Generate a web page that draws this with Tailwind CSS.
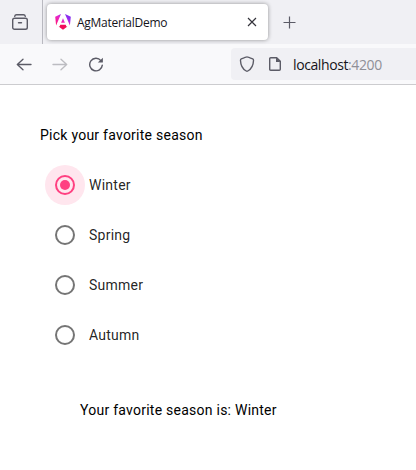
<!DOCTYPE html>
<html lang="en">
<head>
<meta charset="utf-8">
<title>AgMaterialDemo</title>
<script src="https://cdn.jsdelivr.net/npm/@tailwindcss/browser@4"></script>
</head>
<body class="w-[416px] h-[470px] overflow-hidden bg-white font-['Roboto',sans-serif] text-sm leading-5 tracking-[0.25px] text-black">
<header class="font-['Open_Sans',sans-serif] tracking-normal">
  <div class="flex h-11 bg-[#f0f0f4]">
    <div class="flex w-[43px] shrink-0 border-r border-[#b9b9c0] pl-3 pt-[14px]">
      <svg class="size-4" viewBox="0 0 16 16" fill="none" stroke="#5b5b66" stroke-width="1.4" stroke-linecap="round" stroke-linejoin="round"><path d="M2.7 2.3 Q3 .7 4.5 .7 H11.5 Q13 .7 13.3 2.3"/><rect x=".7" y="4.2" width="14.6" height="11" rx="1.8"/><path d="M6.5 8.8H9.5"/></svg>
    </div>
    <div class="ml-1 mt-1 flex h-9 w-[221px] shrink-0 items-center rounded bg-white pl-2 pr-[11px] shadow-[0_0_4px_rgba(0,0,0,0.4)]">
      <svg class="size-4 shrink-0" viewBox="0 0 16 16">
        <defs><linearGradient id="lg" x1="0" y1="1" x2="1" y2="0"><stop offset="0" stop-color="#ff1463"/><stop offset=".45" stop-color="#ed25c4"/><stop offset=".7" stop-color="#9c2af0"/><stop offset="1" stop-color="#6633ed"/></linearGradient></defs>
        <path fill="url(#lg)" d="M6 0 .2 2.7l.9 8.8L6 0zM10 0l4.9 11.5.9-8.8L10 0zM8 4.2 6.1 8.7h3.8L8 4.2z"/>
        <path fill="#f20c5c" d="M5.3 10.7h5.4l.7 1.7 1 .1L8 15.8 3.6 12.5l1-.1z"/>
      </svg>
      <span class="ml-[6px] whitespace-nowrap pt-[2px] text-[12px] tracking-[-0.27px] text-[#15141a]">AgMaterialDemo</span>
      <svg class="ml-auto size-[10px]" viewBox="0 0 10 10" stroke="#34333b" stroke-width="1.15"><path d="M1 1 9 9M9 1 1 9"/></svg>
    </div>
    <svg class="ml-[15px] mt-4 size-[13px]" viewBox="0 0 13 13" stroke="#5b5b66" stroke-width="1.2"><path d="M6.5 .5V12.5M.5 6.5H12.5"/></svg>
  </div>
  <div class="flex h-[41px] items-center border-b border-[#cccccf] bg-[#f9f9fb] pl-4">
    <svg class="size-4" viewBox="0 0 16 16" fill="none" stroke="#5b5b66" stroke-width="1.35" stroke-linecap="round" stroke-linejoin="round"><path d="M15 8.5H1.3M7 3.2 1.3 8.5 7 13.8"/></svg>
    <svg class="ml-5 size-4" viewBox="0 0 16 16" fill="none" stroke="#bcbcc1" stroke-width="1.35" stroke-linecap="round" stroke-linejoin="round"><path d="M1 8.5H14.7M9 3.2 14.7 8.5 9 13.8"/></svg>
    <svg class="ml-5 size-4" viewBox="0 0 16 16"><path d="M12.9 4.6A6.3 6.3 0 1 0 14.3 9.1" fill="none" stroke="#5b5b66" stroke-width="1.4" stroke-linecap="round"/><path fill="#5b5b66" d="M14.9 1.7V6.5H9.8z"/></svg>
    <div class="ml-[127px] flex h-8 flex-1 items-center rounded-l bg-[#f0f0f4] pl-2">
      <svg class="size-4" viewBox="0 0 16 16" fill="none" stroke="#5b5b66" stroke-width="1.35" stroke-linejoin="round"><path d="M8 .8Q9 .8 13.7 2.9Q14.6 3.3 14.5 4.6Q14.2 12 8.8 15Q8 15.4 7.2 15Q1.8 12 1.5 4.6Q1.4 3.3 2.3 2.9Q7 .8 8 .8Z"/></svg>
      <svg class="ml-3 size-4" viewBox="0 0 16 16"><path fill="none" stroke="#5b5b66" stroke-width="1.4" stroke-linejoin="round" d="M3.7 1.7H9.7L13.3 5.3V13.3Q13.3 14.3 12.3 14.3H3.7Q2.7 14.3 2.7 13.3V2.7Q2.7 1.7 3.7 1.7Z"/><path fill="#5b5b66" d="M9 1.5V6H13.5z"/></svg>
      <span class="ml-[10px] pt-[2px] text-[14px] tracking-[-0.4px] text-[#15141a]">localhost<span class="text-[#8f8f97]">:4200</span></span>
    </div>
  </div>
</header>
<main class="px-10 pt-10">
  <p>Pick your favorite season</p>
  <div class="mt-5 flex flex-col gap-[10px] pl-[5px] text-black/87">
    <label class="flex h-10 items-center gap-1"><span class="flex size-10 items-center justify-center rounded-full bg-[#ffe6ee]"><span class="flex size-5 items-center justify-center rounded-full border-2 border-[#ff4081]"><span class="size-[10px] rounded-full bg-[#ff4081]"></span></span></span>Winter</label>
    <label class="flex h-10 items-center gap-1"><span class="flex size-10 items-center justify-center"><span class="size-5 rounded-full border-2 border-[#757575]"></span></span>Spring</label>
    <label class="flex h-10 items-center gap-1"><span class="flex size-10 items-center justify-center"><span class="size-5 rounded-full border-2 border-[#757575]"></span></span>Summer</label>
    <label class="flex h-10 items-center gap-1"><span class="flex size-10 items-center justify-center"><span class="size-5 rounded-full border-2 border-[#757575]"></span></span>Autumn</label>
  </div>
  <p class="ml-10 mt-[45px]">Your favorite season is: Winter</p>
</main>
</body>
</html>
